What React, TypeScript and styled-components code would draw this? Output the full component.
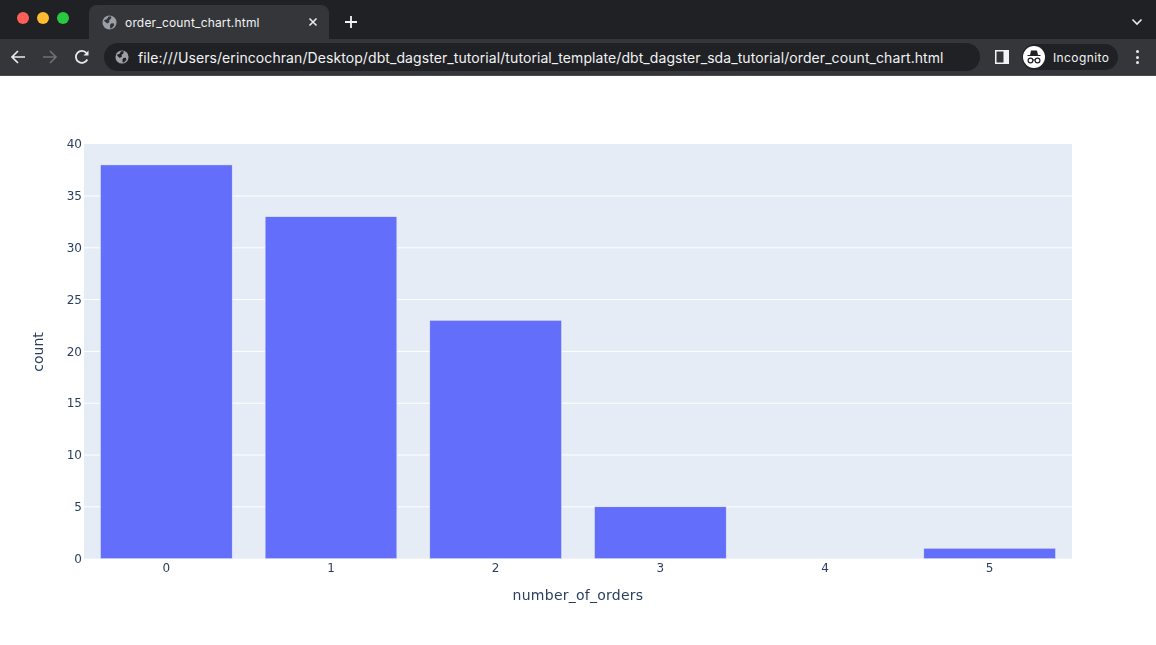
import React from "react";
import styled, { createGlobalStyle } from "styled-components";

const Global = createGlobalStyle`
  html, body { margin: 0; padding: 0; background: #fff; overflow: hidden; }
  #root { width: 1156px; height: 645px; }
`;

const Page = styled.div`
  width: 1156px;
  height: 645px;
  display: flex;
  flex-direction: column;
  background: #fff;
  font-family: "Inter", "Liberation Sans", sans-serif;
`;

const TitleBar = styled.div`
  height: 39px;
  background: #202124;
  display: flex;
  align-items: flex-end;
  padding-left: 17px;
  padding-right: 13px;
  flex-shrink: 0;
`;

const Traffic = styled.div`
  display: flex;
  gap: 8px;
  align-self: flex-start;
  margin-top: 12px;
  width: 72px;
`;

const Dot = styled.span<{ $c: string }>`
  width: 12px;
  height: 12px;
  border-radius: 50%;
  background: ${(p) => p.$c};
`;

const Tab = styled.div`
  width: 240px;
  height: 34px;
  background: #35363a;
  border-radius: 8px 8px 0 0;
  display: flex;
  align-items: center;
  padding: 0 10px 0 13px;
  box-sizing: border-box;
  color: #e8eaed;
  font-size: 12px;
  gap: 8px;
`;

const TabTitle = styled.span`
  flex: 1;
  letter-spacing: 0.18px;
  font-weight: 400;
  color: #f1f3f4;
  white-space: nowrap;
`;

const NewTab = styled.div`
  margin-left: 15px;
  height: 34px;
  display: flex;
  align-items: center;
`;

const Spacer = styled.div`
  flex: 1;
`;

const Chevron = styled.div`
  height: 34px;
  display: flex;
  align-items: center;
`;

const Toolbar = styled.div`
  height: 36px;
  background: #35363a;
  display: flex;
  align-items: center;
  padding: 0 10px 0 10px;
  flex-shrink: 0;
  border-bottom: 1px solid #4a4b4f;
`;

const NavIcon = styled.div`
  width: 16px;
  height: 16px;
  display: flex;
  margin-right: 16px;
`;

const Omnibox = styled.div`
  width: 876px;
  height: 28px;
  margin-left: -2px;
  border-radius: 14px;
  background: #202124;
  display: flex;
  align-items: center;
  padding-left: 11px;
  box-sizing: border-box;
  gap: 9px;
`;

const Url = styled.span`
  color: #f1f3f4;
  font-size: 14px;
  letter-spacing: 0.082px;
  white-space: nowrap;
`;

const SideIcon = styled.div`
  margin-left: 15px;
  width: 14px;
  height: 14px;
  display: flex;
`;

const Profile = styled.div`
  margin-left: 13px;
  height: 26px;
  width: 96px;
  border-radius: 13px;
  background: #202124;
  display: flex;
  align-items: center;
  gap: 8px;
  padding-left: 1px;
  box-sizing: border-box;
  color: #f1f3f4;
  font-size: 12px;
  letter-spacing: 0.4px;
`;

const Avatar = styled.div`
  width: 22px;
  height: 22px;
  border-radius: 50%;
  background: #fff;
  display: flex;
  align-items: center;
  justify-content: center;
`;

const Kebab = styled.div`
  margin-left: 18px;
  display: flex;
  flex-direction: column;
  gap: 2.5px;
`;

const KebabDot = styled.span`
  width: 3px;
  height: 3px;
  border-radius: 50%;
  background: #e8eaed;
`;

const Content = styled.main`
  flex: 1;
  display: flex;
`;

const Svg = styled.svg`
  display: block;
  will-change: transform;
`;

const TickText = styled.text`
  font-family: "DejaVu Sans", "Open Sans", sans-serif;
  font-size: 12px;
  fill: #2a3f5f;
`;

const AxisTitle = styled.text<{ $spacing?: number }>`
  font-family: "DejaVu Sans", "Open Sans", sans-serif;
  font-size: 14px;
  fill: #2a3f5f;
  letter-spacing: ${(p) => p.$spacing ?? 0}px;
`;

const Globe = ({ size, fg, bg }: { size: number; fg: string; bg: string }) => (
  <svg width={size} height={size} viewBox="0 0 16 16">
    <circle cx="8" cy="8" r="7.5" fill={fg} />
    <path
      d="M2 5.5 L5 4.5 L7 1.5 L10 1.5 L9.5 4 L7.5 5.5 L8 7.5 L5.5 9 L3.5 7.5 Z M9.5 9 L12.5 8.8 L13 11 L10.5 14 L8.8 14.3 L8.5 11 Z"
      fill={bg}
    />
  </svg>
);

const values = [38, 33, 23, 5, 0, 1];
const X0 = 84;
const PW = 988;
const Y0 = 482.6; // baseline in the chart's coordinates
const UNIT = 10.36;
const TOP = 68;
const STEP = PW / 6;
const BW = 131.7;

const Chart = () => (
  <Svg width={1156} height={569} viewBox="0 0 1156 569">
    <rect x={X0} y={TOP} width={PW} height={Y0 - TOP} fill="#E5ECF6" />
    {[5, 10, 15, 20, 25, 30, 35].map((v) => (
      <line
        key={v}
        x1={X0}
        x2={X0 + PW}
        y1={Y0 - v * UNIT}
        y2={Y0 - v * UNIT}
        stroke="#fff"
        strokeWidth={1}
      />
    ))}
    {values.map((v, i) =>
      v > 0 ? (
        <rect
          key={i}
          x={X0 + STEP * i + (STEP - BW) / 2}
          y={Y0 - v * UNIT}
          width={BW}
          height={v * UNIT}
          fill="#636EFA"
          stroke="#E5ECF6"
          strokeWidth={0.5}
        />
      ) : null
    )}
    {[0, 5, 10, 15, 20, 25, 30, 35, 40].map((v) => (
      <TickText key={v} x={82} y={Y0 - v * UNIT + 4.2} textAnchor="end">
        {v}
      </TickText>
    ))}
    {values.map((_, i) => (
      <TickText key={i} x={X0 + STEP * (i + 0.5)} y={496} textAnchor="middle">
        {i}
      </TickText>
    ))}
    <AxisTitle x={578} y={524} textAnchor="middle" $spacing={0.25}>
      number_of_orders
    </AxisTitle>
    <AxisTitle x={43} y={276} textAnchor="middle" transform="rotate(-90 43 276)">
      count
    </AxisTitle>
  </Svg>
);

export default function App() {
  return (
    <Page>
      <Global />
      <TitleBar>
        <Traffic>
          <Dot $c="#ff5f57" />
          <Dot $c="#febc2e" />
          <Dot $c="#28c840" />
        </Traffic>
        <Tab>
          <Globe size={15} fg="#9aa0a6" bg="#35363a" />
          <TabTitle>order_count_chart.html</TabTitle>
          <svg width="12" height="12" viewBox="0 0 12 12">
            <path d="M2.5 2.5 L9.5 9.5 M9.5 2.5 L2.5 9.5" stroke="#e8eaed" strokeWidth="1.6" />
          </svg>
        </Tab>
        <NewTab>
          <svg width="14" height="14" viewBox="0 0 14 14">
            <path d="M7 1 V13 M1 7 H13" stroke="#f1f3f4" strokeWidth="1.8" />
          </svg>
        </NewTab>
        <Spacer />
        <Chevron>
          <svg width="12" height="8" viewBox="0 0 12 8">
            <path d="M1.5 1.5 L6 6 L10.5 1.5" fill="none" stroke="#e8eaed" strokeWidth="1.6" />
          </svg>
        </Chevron>
      </TitleBar>
      <Toolbar>
        <NavIcon>
          <svg width="16" height="16" viewBox="0 0 16 16">
            <path d="M15 8 H2 M8 2 L2 8 L8 14" fill="none" stroke="#e8eaed" strokeWidth="1.7" />
          </svg>
        </NavIcon>
        <NavIcon>
          <svg width="16" height="16" viewBox="0 0 16 16">
            <path d="M1 8 H14 M8 2 L14 8 L8 14" fill="none" stroke="#6e7074" strokeWidth="1.7" />
          </svg>
        </NavIcon>
        <NavIcon>
          <svg width="16" height="16" viewBox="0 0 16 16">
            <path d="M13.3 10.5 A6 6 0 1 1 12.5 4" fill="none" stroke="#e8eaed" strokeWidth="1.8" />
            <path d="M14.5 1.5 V6.5 H9.5 Z" fill="#e8eaed" />
          </svg>
        </NavIcon>
        <Omnibox>
          <Globe size={14} fg="#9aa0a6" bg="#202124" />
          <Url>file:///Users/erincochran/Desktop/dbt_dagster_tutorial/tutorial_template/dbt_dagster_sda_tutorial/order_count_chart.html</Url>
        </Omnibox>
        <SideIcon>
          <svg width="14" height="14" viewBox="0 0 14 14">
            <path fillRule="evenodd" d="M0 0 H14 V14 H0 Z M1.5 1.5 V12.5 H8.5 V1.5 Z" fill="#f1f3f4" />
          </svg>
        </SideIcon>
        <Profile>
          <Avatar>
            <svg width="18" height="18" viewBox="0 0 18 18">
              <path d="M6 2.5 H12 L13 7 H15.5 V8 H2.5 V7 H5 Z" fill="#202124" />
              <circle cx="5.5" cy="12.5" r="2.4" fill="none" stroke="#202124" strokeWidth="1.2" />
              <circle cx="12.5" cy="12.5" r="2.4" fill="none" stroke="#202124" strokeWidth="1.2" />
              <path d="M7.9 12 H10.1" stroke="#202124" strokeWidth="1.2" />
            </svg>
          </Avatar>
          Incognito
        </Profile>
        <Kebab>
          <KebabDot />
          <KebabDot />
          <KebabDot />
        </Kebab>
      </Toolbar>
      <Content>
        <Chart />
      </Content>
    </Page>
  );
}
